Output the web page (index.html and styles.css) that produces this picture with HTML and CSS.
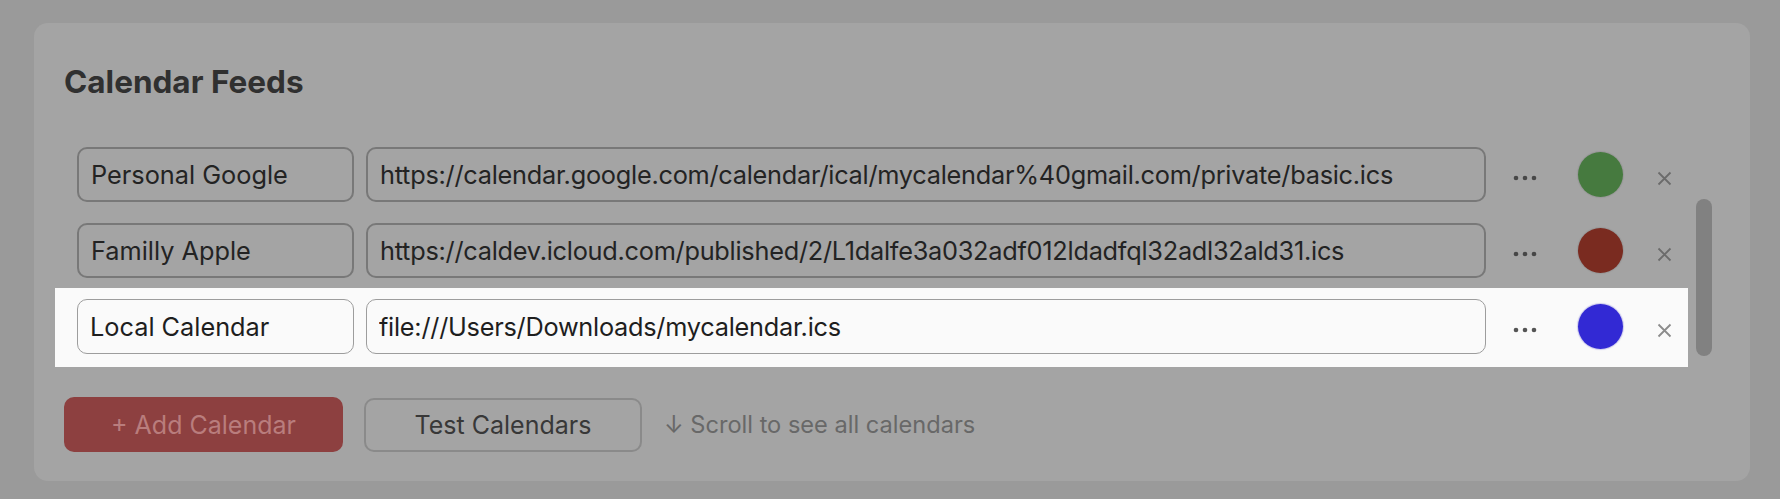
FILE: index.html
```html
<!DOCTYPE html>
<html lang="en">
<head>
<meta charset="utf-8">
<title>Calendar Feeds</title>
<link rel="stylesheet" href="styles.css">
</head>
<body>
<section class="card">
  <h2 class="title">Calendar Feeds</h2>
  <div class="feeds">
    <div class="list">
      <div class="row">
        <input class="field name" type="text" value="Personal Google">
        <input class="field url" type="text" value="https://calendar.google.com/calendar/ical/mycalendar%40gmail.com/private/basic.ics">
        <span class="more"><svg width="24" height="6" viewBox="0 0 24 6"><circle cx="3" cy="3" r="2.3"/><circle cx="12" cy="3" r="2.3"/><circle cx="21" cy="3" r="2.3"/></svg></span>
        <span class="swatch green"></span>
        <span class="remove"><svg width="15" height="15" viewBox="0 0 15 15"><path d="M1.5 1.5 L13.5 13.5 M13.5 1.5 L1.5 13.5"/></svg></span>
      </div>
      <div class="row">
        <input class="field name" type="text" value="Familly Apple">
        <input class="field url" type="text" value="https://caldev.icloud.com/published/2/L1dalfe3a032adf012ldadfql32adl32ald31.ics">
        <span class="more"><svg width="24" height="6" viewBox="0 0 24 6"><circle cx="3" cy="3" r="2.3"/><circle cx="12" cy="3" r="2.3"/><circle cx="21" cy="3" r="2.3"/></svg></span>
        <span class="swatch red"></span>
        <span class="remove"><svg width="15" height="15" viewBox="0 0 15 15"><path d="M1.5 1.5 L13.5 13.5 M13.5 1.5 L1.5 13.5"/></svg></span>
      </div>
      <div class="row active">
        <input class="field name" type="text" value="Local Calendar">
        <input class="field url" type="text" value="file:///Users/Downloads/mycalendar.ics">
        <span class="more"><svg width="24" height="6" viewBox="0 0 24 6"><circle cx="3" cy="3" r="2.3"/><circle cx="12" cy="3" r="2.3"/><circle cx="21" cy="3" r="2.3"/></svg></span>
        <span class="swatch blue"></span>
        <span class="remove"><svg width="15" height="15" viewBox="0 0 15 15"><path d="M1.5 1.5 L13.5 13.5 M13.5 1.5 L1.5 13.5"/></svg></span>
      </div>
    </div>
    <div class="scrollbar"><div class="thumb"></div></div>
  </div>
  <div class="actions">
    <button class="btn primary" type="button">+ Add Calendar</button>
    <button class="btn secondary" type="button">Test Calendars</button>
    <span class="hint">↓ Scroll to see all calendars</span>
  </div>
</section>
</body>
</html>
```

FILE: styles.css
```css
* { box-sizing: border-box; }

html, body {
  margin: 0;
  padding: 0;
}

body {
  background: #9a9a9a;
  font-family: Inter, "Liberation Sans", sans-serif;
  padding: 23px 0 0 34px;
  height: 499px;
  overflow: hidden;
}

.card {
  width: 1716px;
  background: #a4a4a4;
  border-radius: 14px;
  padding: 41px 38px 29px 21px;
}

.title {
  margin: 0 0 0 9px;
  font-size: 31.5px;
  line-height: 36px;
  font-weight: 700;
  color: #303030;
}

.feeds {
  display: flex;
  margin-top: 36px;
}

.list {
  width: 1633px;
  display: flex;
  flex-direction: column;
}

.row {
  display: flex;
  align-items: center;
  padding: 11px 16px 10px 22px;
}

.row.active {
  background: #fafafa;
  padding-bottom: 13px;
}

.field {
  height: 55px;
  border: 2px solid #787878;
  border-radius: 10px;
  background: #a4a4a4;
  font-family: Inter, "Liberation Sans", sans-serif;
  font-size: 25.3px;
  color: #232323;
  padding: 0 12px;
  outline: none;
}

.row.active .field {
  background: #fafafa;
  border: 1.5px solid #9d9d9d;
  color: #1e1e1e;
}

.name { width: 277px; }

.url {
  width: 1120px;
  margin-left: 12px;
  letter-spacing: -0.25px;
}

.more {
  margin-left: 27px;
  width: 24px;
  height: 6px;
  margin-top: 7px;
  display: flex;
}

.more svg { fill: #474747; }
.row.active .more svg { fill: #555555; }

.swatch {
  margin-left: 41px;
  width: 45px;
  height: 45px;
  border-radius: 50%;
  box-shadow: 0 0 1px 1px rgba(0, 0, 0, 0.08);
}

.green { background: #467a3f; }
.red { background: #7a2b20; }
.blue {
  background: #3229d4;
  box-shadow: 0 0 1px 1px rgba(60, 50, 200, 0.25);
}

.remove {
  margin-left: 34px;
  width: 15px;
  height: 15px;
  margin-top: 7px;
  display: flex;
}

.remove svg {
  stroke: #6b6b6b;
  stroke-width: 1.8;
  fill: none;
}

.row.active .remove svg { stroke: #8c8c8c; }

.scrollbar {
  margin-left: 8px;
  padding-top: 63px;
}

.thumb {
  width: 16px;
  height: 157px;
  border-radius: 8px;
  background: #818181;
}

.actions {
  display: flex;
  align-items: center;
  margin: 30px 0 0 9px;
}

.btn {
  font-family: Inter, "Liberation Sans", sans-serif;
  font-size: 25px;
  border-radius: 10px;
  height: 55px;
  cursor: pointer;
}

.primary {
  width: 279px;
  background: #8d4040;
  border: none;
  color: #b97d7d;
}

.secondary {
  width: 278px;
  height: 54px;
  margin-left: 21px;
  background: #a4a4a4;
  border: 2px solid #8a8a8a;
  color: #383838;
}

.hint {
  margin-left: 22px;
  font-size: 23.6px;
  color: #686868;
}
```
